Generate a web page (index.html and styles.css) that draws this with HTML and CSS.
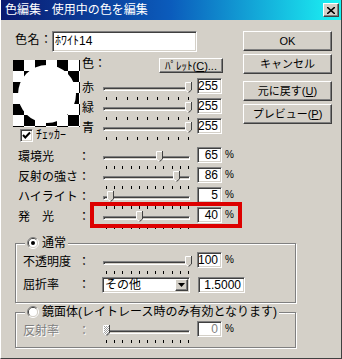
FILE: index.html
```html
<!DOCTYPE html>
<html lang="ja">
<head>
  <meta charset="UTF-8" />
  <title>色編集</title>
  <link rel="stylesheet" href="styles.css">
</head>
<body>
  <svg class="defs" width="0" height="0">
    <defs>
      <pattern id="dith" width="2" height="2" patternUnits="userSpaceOnUse">
        <rect width="2" height="2" fill="#fff"/>
        <rect width="1" height="1" fill="#a0a0a0"/>
        <rect x="1" y="1" width="1" height="1" fill="#a0a0a0"/>
      </pattern>
      <symbol id="thumb" viewBox="0 0 7 11">
        <path d="M0 0H7V8L3.5 11L0 8Z" fill="#d4d0c8"/>
        <path d="M.5 8V.5H6M.5 8L3.5 10.5" fill="none" stroke="#fff"/>
        <path d="M6.5 0V8L3.5 10.6" fill="none" stroke="#404040"/>
      </symbol>
      <symbol id="thumb-off" viewBox="0 0 7 11">
        <path d="M0 0H7V8L3.5 11L0 8Z" fill="url(#dith)"/>
        <path d="M.5 8V.5H6M.5 8L3.5 10.5" fill="none" stroke="#fff"/>
        <path d="M6.5 0V8L3.5 10.6" fill="none" stroke="#404040"/>
      </symbol>
      <symbol id="radio" viewBox="0 0 12 12">
        <path d="M2.1 9.9A5.5 5.5 0 0 1 9.9 2.1" fill="none" stroke="#808080"/>
        <path d="M9.9 2.1A5.5 5.5 0 0 1 2.1 9.9" fill="none" stroke="#fff"/>
        <path d="M2.8 9.2A4.5 4.5 0 0 1 9.2 2.8" fill="none" stroke="#404040"/>
        <path d="M9.2 2.8A4.5 4.5 0 0 1 2.8 9.2" fill="none" stroke="#d4d0c8"/>
        <circle cx="6" cy="6" r="4" fill="#fff"/>
      </symbol>
    </defs>
  </svg>

  <div class="window">
    <div class="titlebar">
      <span class="title">色編集 - 使用中の色を編集</span>
      <span class="close">
        <svg width="8" height="7" viewBox="0 0 8 7"><path d="M0 0L8 7M8 0L0 7" stroke="#000" stroke-width="1.6"/></svg>
      </span>
    </div>

    <div class="content">
      <div class="top">
        <div class="main">
          <div class="name-row">
            <span class="name-label">色名：</span>
            <div class="edit name-edit">ﾎﾜｲﾄ14</div>
          </div>

          <div class="color-area">
            <div class="preview-col">
              <div class="preview"><div class="swatch"></div></div>
              <div class="check-row">
                <span class="edit checkbox">
                  <svg width="11" height="11" viewBox="0 0 11 11"><path d="M2 5L4.3 7.5L9 2.5" fill="none" stroke="#000" stroke-width="2"/></svg>
                </span>
                ﾁｪｯｶｰ
              </div>
            </div>

            <div class="color-ctrls">
              <div class="color-head">
                <span class="color-label">色：</span>
                <button class="btn palette">ﾊﾟﾚｯﾄ(<u>C</u>)...</button>
              </div>
              <div class="crows">
                <div class="crow">
                  <span class="clabel">赤</span>
                  <div class="slider">
                    <div class="track"></div>
                    <div class="ticks"><i></i><i></i><i></i><i></i><i></i><i></i><i></i><i></i><i></i></div>
                    <svg class="thumb" style="left:84px"><use href="#thumb"/></svg>
                  </div>
                  <div class="edit val">255</div>
                </div>
                <div class="crow">
                  <span class="clabel">緑</span>
                  <div class="slider">
                    <div class="track"></div>
                    <div class="ticks"><i></i><i></i><i></i><i></i><i></i><i></i><i></i><i></i><i></i></div>
                    <svg class="thumb" style="left:84px"><use href="#thumb"/></svg>
                  </div>
                  <div class="edit val">255</div>
                </div>
                <div class="crow">
                  <span class="clabel">青</span>
                  <div class="slider">
                    <div class="track"></div>
                    <div class="ticks"><i></i><i></i><i></i><i></i><i></i><i></i><i></i><i></i><i></i></div>
                    <svg class="thumb" style="left:84px"><use href="#thumb"/></svg>
                  </div>
                  <div class="edit val">255</div>
                </div>
              </div>
            </div>
          </div>

          <div class="props">
            <div class="prow">
              <span class="plabel">環境光</span><span class="colon">：</span>
              <div class="slider">
                <div class="track"></div>
                <div class="ticks"><i></i><i></i><i></i><i></i><i></i><i></i><i></i><i></i><i></i><i></i><i></i></div>
                <svg class="thumb" style="left:55px"><use href="#thumb"/></svg>
              </div>
              <div class="edit val">65</div><span class="pct">%</span>
            </div>
            <div class="prow">
              <span class="plabel">反射の強さ</span><span class="colon">：</span>
              <div class="slider">
                <div class="track"></div>
                <div class="ticks"><i></i><i></i><i></i><i></i><i></i><i></i><i></i><i></i><i></i><i></i><i></i></div>
                <svg class="thumb" style="left:72px"><use href="#thumb"/></svg>
              </div>
              <div class="edit val">86</div><span class="pct">%</span>
            </div>
            <div class="prow">
              <span class="plabel">ハイライト</span><span class="colon">：</span>
              <div class="slider">
                <div class="track"></div>
                <div class="ticks"><i></i><i></i><i></i><i></i><i></i><i></i><i></i><i></i><i></i><i></i><i></i></div>
                <svg class="thumb" style="left:6px"><use href="#thumb"/></svg>
              </div>
              <div class="edit val">5</div><span class="pct">%</span>
            </div>
            <div class="prow hl-row">
              <span class="plabel">発　光</span><span class="colon">：</span>
              <div class="slider">
                <div class="track"></div>
                <div class="ticks"><i></i><i></i><i></i><i></i><i></i><i></i><i></i><i></i><i></i><i></i><i></i></div>
                <svg class="thumb" style="left:35px"><use href="#thumb"/></svg>
              </div>
              <div class="edit val">40</div><span class="pct">%</span>
              <div class="highlight"></div>
            </div>
          </div>
        </div>

        <div class="buttons">
          <button class="btn">OK</button>
          <button class="btn">キャンセル</button>
          <button class="btn gap">元に戻す(<u>U</u>)</button>
          <button class="btn">プレビュー(<u>P</u>)</button>
        </div>
      </div>

      <div class="group group-1">
        <div class="legend">
          <svg class="radio" width="12" height="12" viewBox="0 0 12 12"><use href="#radio"/><circle cx="6" cy="6" r="2" fill="#000"/></svg>
          <span>通常</span>
        </div>
        <div class="group-row">
          <span class="glabel">不透明度</span><span class="colon">：</span>
          <div class="slider">
            <div class="track"></div>
            <div class="ticks"><i></i><i></i><i></i><i></i><i></i><i></i><i></i><i></i><i></i><i></i><i></i></div>
            <svg class="thumb" style="left:84px"><use href="#thumb"/></svg>
          </div>
          <div class="edit val">100</div><span class="pct">%</span>
        </div>
        <div class="group-row select-row">
          <span class="glabel">屈折率</span><span class="colon">：</span>
          <div class="edit select">
            <span class="select-text">その他</span>
            <span class="drop">
              <svg width="7" height="4" viewBox="0 0 7 4"><path d="M0 0H7L3.5 4Z" fill="#000"/></svg>
            </span>
          </div>
          <div class="edit val wide">1.5000</div>
        </div>
      </div>

      <div class="group group-2">
        <div class="legend">
          <svg class="radio" width="12" height="12" viewBox="0 0 12 12"><use href="#radio"/></svg>
          <span>鏡面体(レイトレース時のみ有効となります)</span>
        </div>
        <div class="group-row">
          <span class="glabel disabled">反射率</span><span class="colon disabled">：</span>
          <div class="slider">
            <div class="track"></div>
            <div class="ticks"><i></i><i></i><i></i><i></i><i></i><i></i><i></i><i></i><i></i><i></i><i></i></div>
            <svg class="thumb" style="left:2px"><use href="#thumb-off"/></svg>
          </div>
          <div class="edit val off">0</div><span class="pct">%</span>
        </div>
      </div>
    </div>
  </div>
</body>
</html>
```

FILE: styles.css
```css
body {
  margin: 0;
  background: #d4d0c8;
}

.defs {
  position: absolute;
}

.window {
  width: 342px;
  height: 359px;
  box-sizing: border-box;
  overflow: hidden;
  background: #d4d0c8;
  border-left: 1px solid #fff;
  border-right: 1px solid #404040;
  border-bottom: 1px solid #404040;
  color: #000;
  font-family: "Liberation Sans", "Noto Sans CJK JP", sans-serif;
  font-size: 12px;
  font-weight: 400;
}

.titlebar {
  display: flex;
  align-items: center;
  justify-content: space-between;
  height: 20px;
  padding: 0 2px 0 4px;
  background: linear-gradient(to right, #0a1a70, #0b5cbc 50%, #1cf4f4);
  color: #fff;
  line-height: 20px;
}

.close {
  display: flex;
  align-items: center;
  justify-content: center;
  width: 16px;
  height: 14px;
  box-sizing: border-box;
  background: #d4d0c8;
  border: 1px solid;
  border-color: #fff #404040 #404040 #fff;
  box-shadow: inset -1px -1px #808080;
}

.content {
  padding: 11px 0 0 12px;
}

.top {
  display: flex;
}

.main {
  width: 230px;
}

/* buttons */
.buttons {
  display: flex;
  flex-direction: column;
  width: 89px;
}

.btn {
  display: flex;
  align-items: center;
  justify-content: center;
  height: 20px;
  box-sizing: border-box;
  padding: 0;
  background: #d4d0c8;
  border: 1px solid;
  border-color: #fff #404040 #404040 #fff;
  box-shadow: inset -1px -1px #808080;
  color: #000;
  font: inherit;
  font-size: 11px;
  line-height: 12px;
}

.buttons .btn + .btn {
  margin-top: 3px;
}

.buttons .btn.gap {
  margin-top: 7px;
}

/* sunken fields */
.edit {
  box-sizing: border-box;
  background: #fff;
  border: 1px solid;
  border-color: #808080 #fff #fff #808080;
  box-shadow: inset 1px 1px #404040, inset -1px -1px #d4d0c8;
}

.name-row {
  display: flex;
  height: 21px;
}

.name-label {
  width: 37px;
  margin-left: 2px;
  white-space: nowrap;
  letter-spacing: 0.5px;
  line-height: 19px;
}

.name-edit {
  width: 145px;
  height: 21px;
  padding: 1px 0 0 2px;
  line-height: 16px;
}

/* colour block */
.color-area {
  display: flex;
  margin-top: 6px;
}

.preview-col {
  width: 67px;
  margin-right: 2px;
  padding-top: 2px;
}

.preview {
  display: flex;
  align-items: center;
  justify-content: center;
  width: 67px;
  height: 67px;
  background-color: #fff;
  background-image: conic-gradient(#fff 0 25%, #000 0 50%, #fff 0 75%, #000 0);
  background-size: 22px 22px;
}

.swatch {
  width: 58px;
  height: 58px;
  border-radius: 50%;
  background: #fff;
}

.check-row {
  display: flex;
  align-items: center;
  height: 13px;
  margin-top: 2px;
  padding-left: 7px;
  line-height: 13px;
}

.checkbox {
  display: flex;
  align-items: center;
  justify-content: center;
  width: 13px;
  height: 13px;
  margin-right: 3px;
}

.color-ctrls {
  width: 141px;
}

.color-head {
  display: flex;
  justify-content: space-between;
  height: 15px;
}

.color-label {
  line-height: 12px;
}

.palette {
  width: 64px;
  height: 15px;
}

.crows {
  margin-top: 5px;
}

.crow {
  display: flex;
  height: 20px;
}

.clabel {
  width: 19px;
  line-height: 20px;
}

/* trackbar */
.slider {
  position: relative;
  width: 92px;
  height: 20px;
}

.track {
  width: 87px;
  height: 4px;
  box-sizing: border-box;
  margin: 9px 0 0 2px;
  background: #d4d0c8;
  border: 1px solid;
  border-color: #808080 #fff #fff #808080;
  box-shadow: inset 1px 1px #404040;
}

.ticks {
  display: flex;
  justify-content: space-between;
  width: 83px;
  margin: 6px 0 0 5px;
}

.ticks i {
  width: 1px;
  height: 3px;
  background: #000;
}

.thumb {
  position: absolute;
  top: 4px;
  width: 7px;
  height: 11px;
}

.val {
  width: 25px;
  height: 16px;
  margin-left: 4px;
  padding-right: 3px;
  text-align: right;
  line-height: 14px;
}

.val.off {
  color: #808080;
}

.pct {
  margin-left: 3px;
  font-size: 10px;
  line-height: 15px;
}

/* property rows */
.props {
  margin-top: 5px;
}

.prow {
  display: flex;
  height: 20px;
}

.plabel {
  width: 65px;
  box-sizing: border-box;
  padding-left: 5px;
  line-height: 20px;
}

.colon {
  width: 23px;
  line-height: 20px;
}

.hl-row {
  position: relative;
}

.highlight {
  position: absolute;
  left: 77px;
  top: -5px;
  width: 152px;
  height: 26px;
  box-sizing: border-box;
  border: 4px solid #dd0000;
}

/* group boxes */
.group {
  width: 281px;
  box-sizing: border-box;
  margin-left: 2px;
  border: 1px solid #808080;
  box-shadow: inset 1px 1px #fff, 1px 1px #fff;
}

.group-1 {
  margin-top: 16px;
  padding-bottom: 9px;
}

.group-2 {
  margin-top: 9px;
  padding-bottom: 6px;
}

.legend {
  display: flex;
  align-items: center;
  width: max-content;
  height: 12px;
  margin: -7px 0 0 9px;
  padding: 0 2px;
  background: #d4d0c8;
  line-height: 12px;
}

.radio {
  margin-right: 3px;
}

.group-row {
  display: flex;
  height: 20px;
  margin-top: 3px;
}

.glabel {
  width: 62px;
  box-sizing: border-box;
  padding-left: 7px;
  line-height: 20px;
}

.select-row {
  height: 16px;
  margin-top: 5px;
}

.select-row .glabel,
.select-row .colon {
  line-height: 16px;
}

.select {
  display: flex;
  width: 88px;
  height: 16px;
  margin-left: 1px;
}

.select-text {
  flex: 1;
  padding-left: 2px;
  line-height: 14px;
}

.drop {
  display: flex;
  align-items: center;
  justify-content: center;
  width: 13px;
  height: 12px;
  box-sizing: border-box;
  margin: 1px;
  background: #d4d0c8;
  border: 1px solid;
  border-color: #fff #404040 #404040 #fff;
  box-shadow: inset -1px -1px #808080;
}

.wide {
  width: 47px;
  margin-left: 8px;
}

.disabled {
  color: #808080;
  text-shadow: 1px 1px #fff;
}
```
